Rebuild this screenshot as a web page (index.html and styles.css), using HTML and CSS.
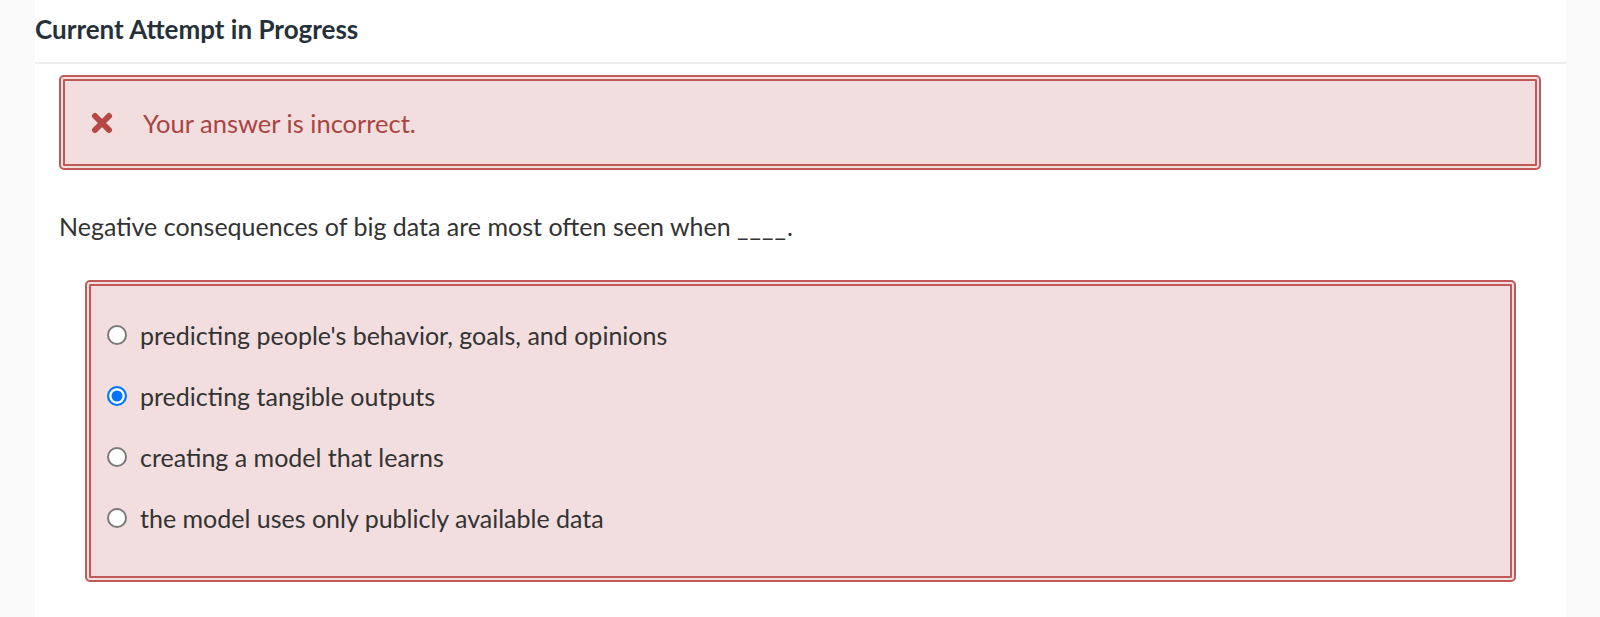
FILE: index.html
```html
<!DOCTYPE html>
<html lang="en">
<head>
<meta charset="utf-8">
<title>Current Attempt in Progress</title>
<link rel="stylesheet" href="styles.css">
</head>
<body>
<div class="panel">
  <h1 class="title">Current Attempt in Progress</h1>
  <div class="content">
    <div class="alert">
      <svg class="x-icon" viewBox="0 0 22 22" width="22" height="22" aria-hidden="true">
        <path d="M4 4 L18 18 M18 4 L4 18" stroke="#b54846" stroke-width="6" stroke-linecap="round" fill="none"/>
      </svg>
      <span class="alert-text">Your answer is incorrect.</span>
    </div>
    <p class="question">Negative consequences of big data are most often seen when <span class="blank">____</span>.</p>
    <div class="options">
      <label class="option"><input type="radio" name="q" class="radio"><span>predicting people's behavior, goals, and opinions</span></label>
      <label class="option"><input type="radio" name="q" class="radio" checked><span>predicting tangible outputs</span></label>
      <label class="option"><input type="radio" name="q" class="radio"><span>creating a model that learns</span></label>
      <label class="option"><input type="radio" name="q" class="radio"><span>the model uses only publicly available data</span></label>
    </div>
  </div>
</div>
</body>
</html>
```
FILE: styles.css
```css
html, body {
  margin: 0;
  padding: 0;
}
body {
  background: #f9f9f9;
  font-family: Lato, "Open Sans", "Liberation Sans", sans-serif;
  color: #333;
  height: 617px;
  overflow: hidden;
}
.panel {
  margin-left: 35px;
  width: 1531px;
  background: #fff;
  min-height: 617px;
}
.title {
  margin: 0;
  font-size: 26px;
  font-weight: 700;
  color: #263039;
  line-height: 32px;
  padding: 13px 0 17px 0;
  border-bottom: 2px solid #eeeeee;
}
.content {
  padding: 11px 25px 0 24px;
}
.alert {
  display: flex;
  align-items: center;
  height: 95px;
  box-sizing: border-box;
  border: 6px double #c05a58;
  border-radius: 5px;
  background: #f2dede;
  padding-left: 26px;
}
.x-icon {
  display: block;
  margin-right: 30px;
  flex: none;
}
.alert-text {
  font-size: 25.5px;
  line-height: 30px;
  color: #a94442;
}
.question {
  margin: 41px 0 0 0;
  font-size: 25px;
  line-height: 30px;
  color: #333;
}
.blank {
  letter-spacing: 1px;
}
.options {
  margin: 39px 25px 0 26px;
  border: 6px double #c05a58;
  border-radius: 5px;
  background: #f2dede;
  padding: 34px 16px 43px 16px;
  display: flex;
  flex-direction: column;
  gap: 31px;
}
.option {
  display: flex;
  align-items: center;
  font-size: 25px;
  line-height: 30px;
  color: #333;
}
.radio {
  -webkit-appearance: none;
  appearance: none;
  margin: 0 13px 0 0;
  width: 20px;
  height: 20px;
  border-radius: 50%;
  border: 2px solid #7a7a7a;
  background: #fff;
  box-sizing: border-box;
  flex: none;
}
.radio:checked {
  border-color: #0075ff;
  background: #0075ff;
  box-shadow: inset 0 0 0 2.5px #fff;
}
```
